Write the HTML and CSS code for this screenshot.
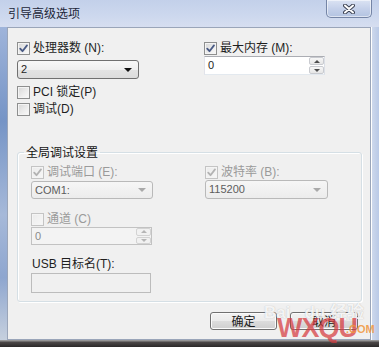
FILE: index.html
```html
<!DOCTYPE html>
<html lang="zh-CN">
<head>
<meta charset="utf-8">
<title>引导高级选项</title>
<link rel="stylesheet" href="styles.css">
</head>
<body>
<div class="window">
  <div class="titlebar">
    <span class="title">引导高级选项</span>
    <div class="close">
      <svg width="12" height="10" viewBox="0 0 12 10">
        <path d="M2 1.5 L10 8.5 M10 1.5 L2 8.5" stroke="#3b4152" stroke-width="4" stroke-linecap="round" fill="none"/>
        <path d="M2 1.5 L10 8.5 M10 1.5 L2 8.5" stroke="#ffffff" stroke-width="2" stroke-linecap="round" fill="none"/>
      </svg>
    </div>
  </div>
  <div class="mid">
    <div class="frame-l"></div>
    <div class="client">
      <div class="top">
        <div class="col">
          <div class="check"><span class="box"><svg viewBox="0 0 11 11"><path d="M2.2 5.6 L4.5 8.2 L9 2.4" class="tick"/></svg></span>处理器数 (N):</div>
          <div class="combo"><span class="val">2</span><span class="arrow"></span></div>
          <div class="check pci"><span class="box"></span>PCI 锁定(P)</div>
          <div class="check dbg"><span class="box"></span>调试(D)</div>
        </div>
        <div class="col">
          <div class="check"><span class="box"><svg viewBox="0 0 11 11"><path d="M2.2 5.6 L4.5 8.2 L9 2.4" class="tick"/></svg></span>最大内存 (M):</div>
          <div class="spin"><span class="val">0</span><span class="spinbtns"><span class="sb"><span class="up"></span></span><span class="sb"><span class="down"></span></span></span></div>
        </div>
      </div>
      <fieldset class="group">
        <legend>全局调试设置</legend>
        <div class="group-grid">
          <div class="gcol">
            <div class="check disabled"><span class="box"><svg viewBox="0 0 11 11"><path d="M2.2 5.6 L4.5 8.2 L9 2.4" class="tick"/></svg></span>调试端口 (E):</div>
            <div class="combo disabled c1"><span class="val">COM1:</span><span class="arrow"></span></div>
            <div class="check disabled chan"><span class="box"></span>通道 (C)</div>
            <div class="spin disabled s2"><span class="val">0</span><span class="spinbtns"><span class="sb"><span class="up"></span></span><span class="sb"><span class="down"></span></span></span></div>
            <div class="usb">USB 目标名(T):</div>
            <div class="textbox"></div>
          </div>
          <div class="gcol">
            <div class="check disabled"><span class="box"><svg viewBox="0 0 11 11"><path d="M2.2 5.6 L4.5 8.2 L9 2.4" class="tick"/></svg></span>波特率 (B):</div>
            <div class="combo disabled c2"><span class="val">115200</span><span class="arrow"></span></div>
          </div>
        </div>
      </fieldset>
      <div class="buttons">
        <button class="btn ok">确定</button>
        <button class="btn cancel">取消</button>
      </div>
    </div>
    <div class="frame-r"></div>
  </div>
  <div class="frame-b"></div>
  <div class="watermark">
    <span class="wm-bai">Bai<span class="wm-du">du</span> 经验</span>
    <span class="wm-red">WXQU</span><span class="wm-com">.COM</span>
  </div>
</div>
</body>
</html>
```
FILE: styles.css
```css
html, body {
  margin: 0;
  padding: 0;
  background: #2e2c2c;
}

body {
  font-family: "Liberation Sans", "Noto Sans CJK SC", sans-serif;
  font-size: 12px;
  color: #1e1e1e;
}

.window {
  position: relative;
  width: 379px;
  height: 347px;
  display: flex;
  flex-direction: column;
  overflow: hidden;
}

/* ---------- title bar ---------- */
.titlebar {
  height: 27px;
  flex: none;
  display: flex;
  align-items: flex-start;
  background: linear-gradient(180deg, #c3d0ea 0%, #cdd8ee 60%, #d6def0 100%);
}

.title {
  padding-left: 8px;
  line-height: 26px;
  font-family: "Noto Sans CJK SC", sans-serif;
  font-size: 12px;
  color: #1c2638;
}

.close {
  margin-left: auto;
  margin-right: 7px;
  width: 44px;
  height: 17px;
  border: 1px solid #7585a6;
  border-top: none;
  border-radius: 0 0 5px 5px;
  background: linear-gradient(180deg, #dbe3f3 0%, #c5d1ea 50%, #b3c3e1 100%);
  box-shadow: inset 0 0 0 1px rgba(255, 255, 255, 0.55);
  display: flex;
  align-items: center;
  justify-content: center;
}

/* ---------- frame ---------- */
.mid {
  height: 313px;
  flex: none;
  display: flex;
}

.frame-l {
  width: 7px;
  flex: none;
  background: linear-gradient(180deg, #9fb4da 0%, #7594c6 30%, #a6b9d9 60%, #8ea6cf 80%, #c6d0de 100%);
}

.frame-r {
  width: 8px;
  flex: none;
  background: linear-gradient(90deg, #ffffff 0, #ffffff 1px, #cdd8ec 1px, #b9c9e6 100%);
}

.frame-b {
  height: 7px;
  flex: none;
  background: linear-gradient(180deg, #a8a8a8 0%, #4a4646 35%, #2b2828 100%);
}

.client {
  flex: 1;
  background: #f0f0f0;
  box-shadow: inset 0 0 0 1px #9aa5b9;
  padding: 15px 0 0 10px;
  display: flex;
  flex-direction: column;
}

/* ---------- top section ---------- */
.top {
  display: grid;
  grid-template-columns: 187px 121px;
}

.col {
  display: flex;
  flex-direction: column;
}

.check {
  height: 13px;
  display: flex;
  align-items: center;
  gap: 3px;
  line-height: 13px;
  white-space: nowrap;
}

.box {
  width: 11px;
  height: 11px;
  flex: none;
  border: 1px solid #8e8f8f;
  background: linear-gradient(135deg, #d6d6d6 0%, #ececec 55%, #fafafa 100%);
  box-shadow: inset 0 0 0 1px #f4f4f4;
  display: flex;
}

.box svg {
  width: 11px;
  height: 11px;
}

.tick {
  fill: none;
  stroke: #4a5b85;
  stroke-width: 1.8;
  stroke-linecap: round;
  stroke-linejoin: round;
}

.combo {
  margin-top: 5px;
  height: 17px;
  border: 1px solid #707070;
  border-radius: 3px;
  background: linear-gradient(180deg, #f8f8f8 0%, #efefef 50%, #e3e3e3 51%, #dcdcdc 100%);
  display: flex;
  align-items: center;
  justify-content: space-between;
  padding: 0 6px 0 3px;
  box-sizing: content-box;
  width: 111px;
}

.val {
  font-size: 11px;
  line-height: 13px;
}

.arrow {
  width: 0;
  height: 0;
  border-left: 4px solid transparent;
  border-right: 4px solid transparent;
  border-top: 4px solid #111;
}

.pci {
  margin-top: 7px;
}

.dbg {
  margin-top: 4px;
}

.spin {
  margin-top: 1px;
  height: 17px;
  border: 1px solid #abadb3;
  border-color: #abadb3 #dbdfe6 #e3e9ef #e2e3ea;
  background: #ffffff;
  display: flex;
  align-items: center;
  justify-content: space-between;
  padding-left: 3px;
  box-sizing: content-box;
  width: 116px;
}

.spinbtns {
  width: 15px;
  height: 17px;
  display: flex;
  flex-direction: column;
  gap: 1px;
}

.sb {
  flex: 1;
  border: 1px solid #c9cbd0;
  border-radius: 2px;
  background: linear-gradient(180deg, #f7f7f7, #e6e6e6);
  display: flex;
  align-items: center;
  justify-content: center;
}

.up {
  width: 0;
  height: 0;
  border-left: 3px solid transparent;
  border-right: 3px solid transparent;
  border-bottom: 3px solid #4d4d4d;
}

.down {
  width: 0;
  height: 0;
  border-left: 3px solid transparent;
  border-right: 3px solid transparent;
  border-top: 3px solid #4d4d4d;
}

/* ---------- group box ---------- */
.group {
  margin: 29px 9px 0 0;
  padding: 7px 0 8px 13px;
  border: 1px solid #d5dfe5;
  border-radius: 3px;
  box-shadow: inset 1px 1px 0 #ffffff, 1px 1px 0 #ffffff;
  min-width: 0;
}

.group legend {
  margin-left: -7px;
  padding: 0 2px;
  line-height: 14px;
  font-family: "Noto Sans CJK SC", sans-serif;
  font-size: 12px;
  color: #151515;
}

.group-grid {
  display: grid;
  grid-template-columns: 174px 122px;
}

.gcol {
  display: flex;
  flex-direction: column;
}

.disabled {
  color: #9a9a9a;
}

.check.disabled .box {
  border-color: #c4c4c4;
  background: linear-gradient(135deg, #ebebeb, #f7f7f7);
}

.check.disabled .tick {
  stroke: #b3b3b3;
}

.combo.disabled {
  border-color: #b9b9b9;
  background: linear-gradient(180deg, #f6f6f6 0%, #f1f1f1 50%, #ececec 100%);
  color: #5d5d5d;
}

.combo.disabled .arrow {
  border-top-color: #a9a9a9;
}

.c1 {
  margin-top: 2px;
  height: 16px;
}

.c2 {
  margin-top: 1px;
  height: 17px;
  width: 112px;
}

.chan {
  margin-top: 14px;
}

.spin.disabled {
  background: #f3f3f3;
  border-color: #c2c2c2;
  color: #8a8a8a;
  height: 16px;
  margin-top: 1px;
}

.spin.disabled .spinbtns {
  height: 16px;
}

.spin.disabled .sb {
  border-color: #d3d3d3;
  background: #f1f1f1;
}

.spin.disabled .up {
  border-bottom-color: #b5b5b5;
}

.spin.disabled .down {
  border-top-color: #b5b5b5;
}

.usb {
  margin-top: 12px;
  line-height: 14px;
  padding-left: 1px;
  color: #1e1e1e;
}

.textbox {
  margin-top: 2px;
  width: 118px;
  height: 18px;
  border: 1px solid #bcbcbc;
  background: #f0f0f0;
}

/* ---------- buttons ---------- */
.buttons {
  margin-top: 10px;
  padding-right: 13px;
  display: flex;
  justify-content: flex-end;
  gap: 13px;
}

.btn {
  height: 18px;
  padding: 0;
  border: 1px solid #707070;
  border-radius: 3px;
  background: linear-gradient(180deg, #f2f2f2 0%, #ebebeb 50%, #dddddd 51%, #cfcfcf 100%);
  box-shadow: inset 0 0 0 1px #fbfbfb;
  font-family: "Noto Sans CJK SC", sans-serif;
  font-size: 12px;
  line-height: 14px;
  color: #1a1a1a;
}

.ok {
  width: 67px;
}

.cancel {
  width: 68px;
}

/* ---------- watermark overlay ---------- */
.watermark {
  position: absolute;
  left: 262px;
  top: 296px;
  width: 117px;
  height: 51px;
  pointer-events: none;
}

.wm-bai {
  position: absolute;
  left: 2px;
  top: 2px;
  font-family: "Liberation Sans", "Noto Sans CJK SC", sans-serif;
  font-size: 17px;
  font-weight: bold;
  color: rgba(255, 255, 255, 0.85);
  text-shadow: 0 0 1px rgba(120, 120, 120, 0.5);
}

.wm-du {
  margin-left: 14px;
}

.wm-red {
  position: absolute;
  left: 15px;
  top: 17px;
  font-family: "Liberation Sans", sans-serif;
  font-size: 27px;
  font-weight: bold;
  letter-spacing: -1px;
  color: rgba(214, 58, 62, 0.72);
}

.wm-com {
  position: absolute;
  left: 84px;
  top: 27px;
  font-family: "Liberation Sans", sans-serif;
  font-size: 11px;
  font-weight: bold;
  color: rgba(240, 150, 60, 0.85);
}
```
